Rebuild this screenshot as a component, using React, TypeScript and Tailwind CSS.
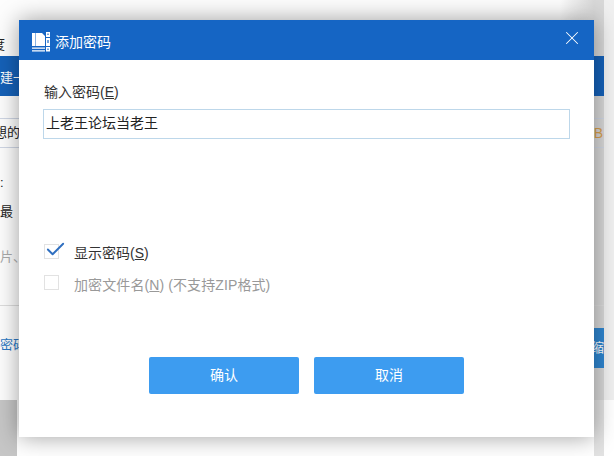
import { Check, X } from 'lucide-react';

const font = "font-['Liberation_Sans','Noto_Sans_CJK_SC',sans-serif]";

// 压缩包图标
function ArchiveIcon() {
  return (
    <svg width="19" height="20" viewBox="0 0 19 20" fill="white" className="mt-[3px]">
      <path d="M0 1h3v13H0zM3.5 1h6.5l3 3v10h-9.5z" />
      <path d="M14 0h4v5h-4zM14 6h4v8h-4z" />
      <path d="M0 15.5h13v1.2H0zM0 18.3h13v1.2H0zM14 15h4v4.5h-4z" />
      <path d="M15.4 1.5h1.2v1.5h-1.2zM15.4 8h1.2v3h-1.2zM15.4 16.5h1.2v1.5h-1.2z" fill="#1565c4" />
    </svg>
  );
}

// 被弹窗遮住的主窗口
function BackWindow() {
  return (
    <div className="absolute left-0 top-0 flex h-[400px] w-[604px] flex-col overflow-hidden bg-[linear-gradient(to_right,#fdfdfd_0,#fdfdfd_560px,#d8d8d8_594px)] text-[13px] leading-[20px] text-[#222]">
      <div className="flex h-[56px] items-end pb-[1px]">
        <span className="-ml-[8px]">度</span>
      </div>
      <div className="flex h-[40px] items-center bg-[#1561b8] pt-[4px] text-white">
        <span>建一</span>
      </div>
      <div className="mt-[22px] flex h-[30px] items-center justify-between border-y border-[#cfd6e4] pr-[1px]">
        <span className="-ml-[6px]">想的</span>
        <span className="text-[14px] text-[#d9a04d]">B</span>
      </div>
      <span className="mt-[25px]">:</span>
      <span className="mt-[9px]">最</span>
      <span className="mt-[25px] text-[#aaa]">片、</span>
      <div className="mt-[38px] border-t border-[#dddddd]" />
      <div className="mt-[22px] flex h-[40px] items-center justify-between">
        <span className="pb-[6px] text-[#2a78c4]">密码</span>
        <span className="flex h-[40px] w-[10px] items-center justify-end overflow-hidden bg-[#2f86d0] text-white">
          <span className="shrink-0">缩</span>
        </span>
      </div>
    </div>
  );
}

export default function App() {
  return (
    <div className={`relative h-[456px] w-[614px] overflow-hidden bg-white ${font}`}>
      <div className="absolute right-0 top-0 h-[400px] w-[10px] bg-[#f0f0f0]" />
      <div className="absolute bottom-0 left-0 h-[56px] w-[17px] bg-[#c6c6c6]" />
      <div className="absolute bottom-0 left-[594px] h-[56px] w-[10px] bg-[#e2e2e2]" />
      <BackWindow />

      {/* 添加密码弹窗 */}
      <div className="absolute left-[19px] top-[20px] flex h-[417px] w-[575px] flex-col bg-white shadow-[0_0_22px_rgba(0,0,0,0.38)]">
        <div className="flex h-[40px] shrink-0 items-center bg-[#1565c4] pl-[13px] pr-[11px] text-white">
          <ArchiveIcon />
          <span className="ml-[4px] pt-[4px] text-[14px]">添加密码</span>
          <X className="mb-[4px] ml-auto h-[22px] w-[22px]" strokeWidth={1.1} />
        </div>

        <div className="flex flex-1 flex-col px-[25px]">
          <label className="mt-[22px] text-[14px] leading-[20px] text-[#333]">
            输入密码(<span className="underline">E</span>)
          </label>
          <div className="-ml-[1px] mt-[7px] flex h-[30px] w-[527px] items-center border border-[#bdd7ea] pb-[2px] pl-[2px] text-[14px] text-[#222]">
            上老王论坛当老王
          </div>

          <div className="mt-[104px] flex h-[16px] items-center">
            <span className="relative h-[15px] w-[15px] border border-[#e2e2e2]">
              <Check className="absolute -left-[1px] -top-[7px] h-[23px] w-[23px] text-[#2f6fc0]" strokeWidth={2} />
            </span>
            <span className="ml-[15px] mt-[4px] text-[14px] text-[#333]">
              显示密码(<span className="underline">S</span>)
            </span>
          </div>
          <div className="mt-[15px] flex h-[16px] items-center">
            <span className="h-[15px] w-[15px] border border-[#e2e2e2]" />
            <span className="ml-[15px] mt-[6px] text-[14px] tracking-[0.1px] text-[#999]">
              加密文件名(<span className="underline">N</span>) (不支持ZIP格式)
            </span>
          </div>

          <div className="mt-[67px] flex gap-[15px] pl-[105px]">
            <button className="h-[37px] w-[150px] rounded-[2px] bg-[#3d9cf0] text-[14px] text-white">确认</button>
            <button className="h-[37px] w-[150px] rounded-[2px] bg-[#3d9cf0] text-[14px] text-white">取消</button>
          </div>
        </div>
      </div>
    </div>
  );
}
